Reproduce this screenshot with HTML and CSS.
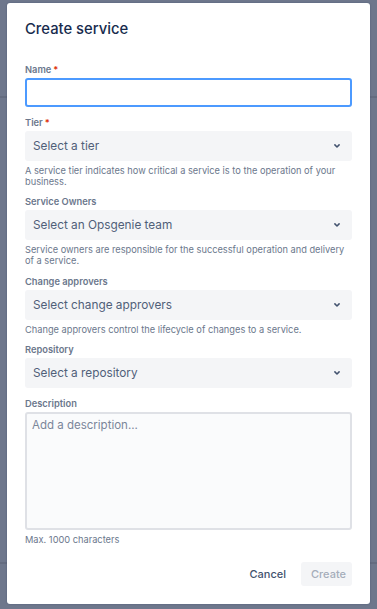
FILE: index.html
```html
<!DOCTYPE html>
<html lang="en">
<head>
<meta charset="utf-8">
<title>Create service</title>
<link rel="stylesheet" href="styles.css">
</head>
<body>
<div class="modal">
  <h1 class="title">Create service</h1>
  <form class="form">
    <div class="field first">
      <label class="label">Name<span class="req">*</span></label>
      <div class="input focused"></div>
    </div>
    <div class="field">
      <label class="label">Tier<span class="req">*</span></label>
      <div class="select"><span>Select a tier</span><svg class="chev" viewBox="0 0 6 4" width="6" height="4"><path d="M0.9 0.9 L3 3 L5.1 0.9" fill="none" stroke="#42526e" stroke-width="1.5" stroke-linecap="round" stroke-linejoin="round"/></svg></div>
      <p class="help">A service tier indicates how critical a service is to the operation of your business.</p>
    </div>
    <div class="field">
      <label class="label">Service Owners</label>
      <div class="select"><span>Select an Opsgenie team</span><svg class="chev" viewBox="0 0 6 4" width="6" height="4"><path d="M0.9 0.9 L3 3 L5.1 0.9" fill="none" stroke="#42526e" stroke-width="1.5" stroke-linecap="round" stroke-linejoin="round"/></svg></div>
      <p class="help">Service owners are responsible for the successful operation and delivery of a service.</p>
    </div>
    <div class="field">
      <label class="label">Change approvers</label>
      <div class="select"><span>Select change approvers</span><svg class="chev" viewBox="0 0 6 4" width="6" height="4"><path d="M0.9 0.9 L3 3 L5.1 0.9" fill="none" stroke="#42526e" stroke-width="1.5" stroke-linecap="round" stroke-linejoin="round"/></svg></div>
      <p class="help">Change approvers control the lifecycle of changes to a service.</p>
    </div>
    <div class="field">
      <label class="label">Repository</label>
      <div class="select"><span>Select a repository</span><svg class="chev" viewBox="0 0 6 4" width="6" height="4"><path d="M0.9 0.9 L3 3 L5.1 0.9" fill="none" stroke="#42526e" stroke-width="1.5" stroke-linecap="round" stroke-linejoin="round"/></svg></div>
    </div>
    <div class="field">
      <label class="label">Description</label>
      <div class="textarea"><span class="placeholder">Add a description...</span></div>
      <p class="help">Max. 1000 characters</p>
    </div>
  </form>
  <div class="footer">
    <button class="btn cancel" type="button">Cancel</button>
    <button class="btn create" type="button">Create</button>
  </div>
</div>
</body>
</html>
```
FILE: styles.css
```css
* { box-sizing: border-box; }
html, body { height: 100%; }
body {
  margin: 0;
  font-family: Inter, "Liberation Sans", sans-serif;
  background-color: #6e778c;
  background-image:
    linear-gradient(to bottom, transparent 96px, #646c80 96px, #646c80 98px, transparent 98px),
    linear-gradient(to bottom, transparent 562px, #646c80 562px, #646c80 564px, transparent 564px);
  padding: 3px 7px 5px 7px;
}
.modal {
  background: #fff;
  border-radius: 3px;
  height: 601px;
  padding: 16px 18px 18px 18px;
  display: flex;
  flex-direction: column;
  box-shadow: 0 0 2px rgba(9,30,66,0.3);
}
.title {
  margin: 0;
  font-size: 14.8px;
  line-height: 20px;
  font-weight: 500;
  color: #172b4d;
}
.form { flex: 1; margin-top: 25px; }
.field { margin-top: 9.5px; }
.field.first { margin-top: 0; }
.label {
  display: block;
  font-size: 9.3px;
  line-height: 12px;
  font-weight: 600;
  color: #6b778c;
  margin-bottom: 2px;
}
.req { color: #de350b; margin-left: 2px; }
.input {
  height: 29px;
  border-radius: 3px;
  border: 2px solid #dfe1e6;
  background: #fafbfc;
}
.input.focused { border-color: #4c9aff; background: #fff; }
.select {
  height: 30px;
  border-radius: 3px;
  background: #f4f5f7;
  display: flex;
  align-items: center;
  justify-content: space-between;
  padding: 0 12px 0 8px;
  font-size: 11.8px;
  color: #505f79;
}
.chev { display: block; }
.help {
  margin: 4px 0 0 0;
  font-size: 9.25px;
  line-height: 11px;
  color: #6b778c;
}
.textarea {
  height: 118px;
  border-radius: 3px;
  border: 2px solid #dfe1e6;
  background: #fafbfc;
  padding: 4px 5px;
  font-size: 11.5px;
  line-height: 14px;
}
.placeholder { color: #7a869a; }
.footer {
  display: flex;
  justify-content: flex-end;
  align-items: center;
  gap: 5px;
}
.btn {
  font-family: inherit;
  font-size: 11px;
  font-weight: 500;
  height: 24px;
  border: 0;
  border-radius: 3px;
  padding: 0 10px;
  background: transparent;
}
.cancel { color: #42526e; }
.create { background: #f4f5f7; color: #a5adba; width: 51px; }
```
